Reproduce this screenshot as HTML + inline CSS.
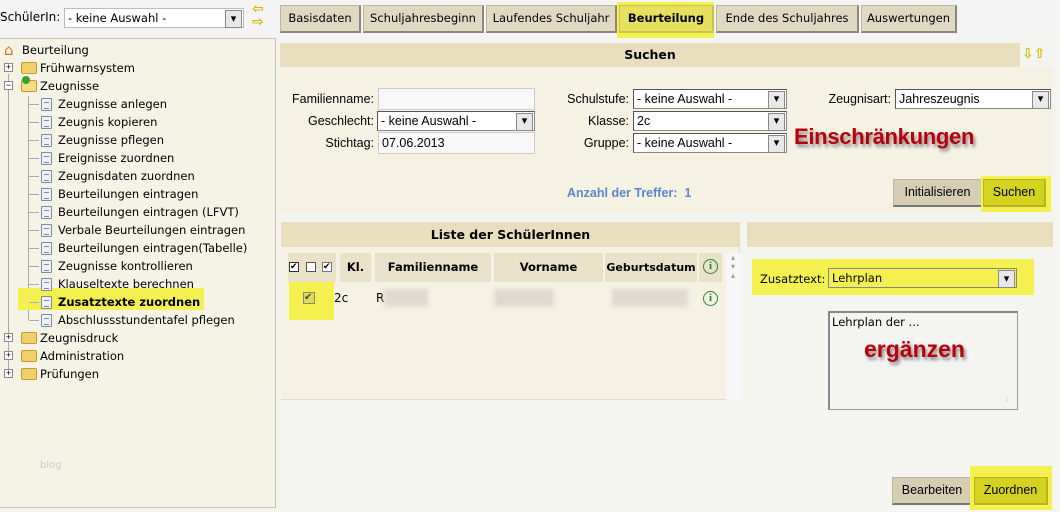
<!DOCTYPE html>
<html><head><meta charset="utf-8"><style>
*{margin:0;padding:0;box-sizing:border-box}
body{width:1060px;height:512px;position:relative;background:#f4f4f0;font-family:"DejaVu Sans",sans-serif;font-size:11px;color:#000;overflow:hidden}
.a{position:absolute;white-space:nowrap}
.tab{position:absolute;top:5px;height:28px;background:#e0d9c2;border:1px solid #bdb59c;border-bottom:2px solid #8d877a;border-right:2px solid #8d877a;font-size:11.5px;line-height:25px;text-align:center}
.hdr{position:absolute;background:#e9dfbf;font-weight:bold;font-size:12.5px;text-align:center}
.sel{position:absolute;height:20px;background:#fff;border:1px solid #888;border-top-color:#555;border-left-color:#555;font-family:"Liberation Sans",sans-serif;font-size:12.5px;line-height:18px;padding-left:3px}
.sel:after{content:"▾";position:absolute;right:1px;top:1px;width:15px;height:16px;background:#e8e8e8;border:1px solid #888;font-size:11px;line-height:15px;text-align:center}
.lbl{position:absolute;font-family:"Liberation Sans",sans-serif;font-size:12.5px;text-align:right;white-space:nowrap}
.btn{position:absolute;height:28px;background:#d6cdb2;border:1px solid #bdb59c;border-bottom:2px solid #777;border-right:2px solid #777;font-family:"Liberation Sans",sans-serif;font-size:12.5px;line-height:25px;text-align:center}
.doc{position:absolute;width:11px;height:13px;border:1px solid #7d8aa3;background:#eef2f8;border-radius:1px}
.doc:before{content:"";position:absolute;left:2px;top:3px;width:5px;height:5px;border-top:1px solid #7d8aa3;border-bottom:1px solid #7d8aa3}
.fold{position:absolute;width:16px;height:12px;background:#f1cf6a;border:1px solid #c49a2c;border-radius:2px}
.pm{position:absolute;width:9px;height:9px;border:1px solid #888;background:#fff;font-size:9px;line-height:7px;text-align:center;font-family:"Liberation Sans",sans-serif}
.ti{position:absolute;font-size:11.5px;white-space:nowrap}
.red{position:absolute;color:#b8000c;font-weight:bold;font-family:"Liberation Sans",sans-serif;text-shadow:2px 3px 3px #888}
.blur{position:absolute;height:18px;background:#dedad0;filter:blur(2px)}
.ic{position:absolute;width:15px;height:15px;border:1.5px solid #2a8a2a;border-radius:50%;color:#2a8a2a;font-weight:bold;font-size:11px;line-height:12px;text-align:center;font-family:"Liberation Serif",serif}
.th{position:absolute;top:253px;height:29px;background:#e9e2c8;font-weight:bold;font-size:11.5px;text-align:center;line-height:29px}
</style></head><body>
<div class="a" style="left:0;top:0;width:1060px;height:38px;background:#f4f4f4"></div>
<div class="a" style="left:0;top:10px;font-size:12px">SchülerIn:</div>
<div class="sel" style="left:64px;top:8px;width:180px;background:#fff;font-family:'DejaVu Sans';font-size:11.5px;border-color:#bbb">- keine Auswahl -</div>
<div class="a" style="left:252px;top:3px;color:#d8b800;font-size:14px;line-height:13px;font-weight:bold">⇦<br>⇨</div>
<div class="tab" style="left:280px;width:81px">Basisdaten</div>
<div class="tab" style="left:363px;width:121px">Schuljahresbeginn</div>
<div class="tab" style="left:486px;width:131px">Laufendes Schuljahr</div>
<div class="a" style="left:617px;top:2px;width:97px;height:36px;background:#f4f050"></div>
<div class="tab" style="left:619px;width:95px;background:#e6e060;font-weight:bold;border-color:#c9c34a">Beurteilung</div>
<div class="tab" style="left:716px;width:143px">Ende des Schuljahres</div>
<div class="tab" style="left:861px;width:96px">Auswertungen</div>
<div class="a" style="left:0;top:38px;width:276px;height:470px;background:#f5f3e6;border:1px solid #c8c4b4;border-left:none"></div>
<div class="a" style="left:8px;top:74px;width:1px;height:300px;border-left:1px solid #aaa"></div>
<div class="a" style="left:28px;top:96px;width:1px;height:224px;border-left:1px solid #aaa"></div>
<div class="a" style="left:4px;top:41px;color:#e07020;font-size:15px">⌂</div>
<div class="ti" style="left:22px;top:43px">Beurteilung</div>
<div class="pm" style="left:4px;top:63px">+</div><div class="fold" style="left:21px;top:62px"></div><div class="ti" style="left:40px;top:61px">Frühwarnsystem</div>
<div class="pm" style="left:4px;top:81px">−</div><div class="fold" style="left:21px;top:80px;background:#f5dd88"></div><div class="a" style="left:22px;top:76px;width:8px;height:8px;border-radius:50%;background:#3aa030"></div><div class="ti" style="left:40px;top:79px">Zeugnisse</div>
<div class="a" style="left:18px;top:288px;width:186px;height:22px;background:#f4f050"></div>
<div id="items"></div>
<div class="pm" style="left:4px;top:333px">+</div><div class="fold" style="left:21px;top:332px"></div><div class="ti" style="left:40px;top:331px">Zeugnisdruck</div>
<div class="pm" style="left:4px;top:351px">+</div><div class="fold" style="left:21px;top:350px"></div><div class="ti" style="left:40px;top:349px">Administration</div>
<div class="pm" style="left:4px;top:369px">+</div><div class="fold" style="left:21px;top:368px"></div><div class="ti" style="left:40px;top:367px">Prüfungen</div>
<div class="a" style="left:40px;top:460px;color:#ccc;font-size:10px">blog</div>
<div class="hdr" style="left:280px;top:43px;width:740px;height:24px;line-height:24px">Suchen</div>
<div class="a" style="left:1022px;top:46px;color:#d8b800;font-size:14px;font-weight:bold">⇩⇧</div>
<div class="a" style="left:280px;top:67px;width:772px;height:145px;background:#f5f2e4"></div>
<div class="lbl" style="left:280px;width:94px;top:92px">Familienname:</div>
<div class="a" style="left:378px;top:88px;width:157px;height:22px;background:#f8f8f8;border:1px solid #ccc"></div>
<div class="lbl" style="left:280px;width:94px;top:114px">Geschlecht:</div>
<div class="sel" style="left:377px;top:111px;width:158px">- keine Auswahl -</div>
<div class="lbl" style="left:280px;width:94px;top:136px">Stichtag:</div>
<div class="a" style="left:378px;top:132px;width:157px;height:22px;background:#f8f8f8;border:1px solid #ccc;font-family:'Liberation Sans';font-size:12.5px;line-height:20px;padding-left:3px">07.06.2013</div>
<div class="lbl" style="left:540px;width:89px;top:92px">Schulstufe:</div>
<div class="sel" style="left:633px;top:89px;width:154px">- keine Auswahl -</div>
<div class="lbl" style="left:540px;width:89px;top:114px">Klasse:</div>
<div class="sel" style="left:633px;top:111px;width:154px">2c</div>
<div class="lbl" style="left:540px;width:89px;top:136px">Gruppe:</div>
<div class="sel" style="left:633px;top:133px;width:154px">- keine Auswahl -</div>
<div class="lbl" style="left:800px;width:91px;top:92px">Zeugnisart:</div>
<div class="sel" style="left:895px;top:89px;width:156px">Jahreszeugnis</div>
<div class="red" style="left:794px;top:124px;font-size:22px;letter-spacing:-0.3px">Einschränkungen</div>
<div class="a" style="left:567px;top:186px;color:#5c86c8;font-weight:bold;font-family:'Liberation Sans';font-size:12.5px">Anzahl der Treffer:&nbsp; 1</div>
<div class="btn" style="left:893px;top:179px;width:90px">Initialisieren</div>
<div class="a" style="left:981px;top:176px;width:70px;height:36px;background:#f4f050"></div>
<div class="btn" style="left:983px;top:179px;width:63px;background:#d6d220;border-color:#b8b420">Suchen</div>
<div class="hdr" style="left:281px;top:222px;width:459px;height:25px;line-height:25px">Liste der SchülerInnen</div>
<div class="a" style="left:281px;top:247px;width:459px;height:153px;background:#f5f2e4;border-right:1px solid #ddd;border-bottom:1px solid #ddd"></div>
<div class="th" style="left:288px;width:48px"></div>
<div class="th" style="left:340px;width:31px">Kl.</div>
<div class="th" style="left:375px;width:116px">Familienname</div>
<div class="th" style="left:494px;width:109px">Vorname</div>
<div class="th" style="left:605px;width:92px;font-size:11px">Geburtsdatum</div>
<div class="th" style="left:699px;width:23px"></div>
<div class="a" style="left:289px;top:262px;width:10px;height:10px;border:1px solid #333;background:#fff;font-size:9px;line-height:8px">✔</div>
<div class="a" style="left:306px;top:262px;width:10px;height:10px;border:1px solid #555;background:#fff"></div>
<div class="a" style="left:322px;top:262px;width:10px;height:10px;border:1px solid #777;background:#fff;font-size:9px;line-height:8px">✔</div>
<div class="ic" style="left:703px;top:259px">i</div>
<div class="a" style="left:289px;top:282px;width:45px;height:38px;background:#f4f050"></div>
<div class="a" style="left:303px;top:292px;width:12px;height:12px;border:1px solid #888;background:#e0dc50;font-size:10px;line-height:10px;color:#444">✔</div>
<div class="a" style="left:334px;top:291px;font-size:12px">2c</div>
<div class="a" style="left:376px;top:291px;font-size:12px">R</div>
<div class="blur" style="left:384px;top:289px;width:44px"></div>
<div class="blur" style="left:494px;top:289px;width:60px"></div>
<div class="blur" style="left:612px;top:289px;width:76px"></div>
<div class="ic" style="left:703px;top:291px">i</div>
<div class="a" style="left:726px;top:253px;width:14px;height:147px;background:#f7f7f7;color:#999;font-size:8px;text-align:center">▴<br>▾<br>▴</div>
<div class="hdr" style="left:747px;top:222px;width:306px;height:25px"></div>
<div class="a" style="left:752px;top:259px;width:282px;height:36px;background:#f4f050"></div>
<div class="lbl" style="left:760px;top:272px;font-family:'DejaVu Sans';font-size:11.5px">Zusatztext:</div>
<div class="sel" style="left:828px;top:268px;width:189px;background:#f4f050;border-color:#888;font-family:'DejaVu Sans';font-size:11.5px">Lehrplan</div>
<div class="a" style="left:828px;top:311px;width:190px;height:99px;border:1px solid #999;border-top:2px solid #888;border-left:2px solid #888;background:#f4f4f2;font-size:11.5px;padding:2px">Lehrplan der ...</div>
<div class="red" style="left:864px;top:336px;font-size:23px">ergänzen</div>
<div class="a" style="left:1004px;top:396px;color:#aaa;font-size:8px">⁘</div>
<div class="btn" style="left:892px;top:477px;width:81px">Bearbeiten</div>
<div class="a" style="left:970px;top:466px;width:82px;height:44px;background:#f4f050"></div>
<div class="btn" style="left:974px;top:477px;width:74px;background:#d6d220;border-color:#b8b420">Zuordnen</div>
<script>
var t=["Zeugnisse anlegen","Zeugnis kopieren","Zeugnisse pflegen","Ereignisse zuordnen","Zeugnisdaten zuordnen","Beurteilungen eintragen","Beurteilungen eintragen (LFVT)","Verbale Beurteilungen eintragen","Beurteilungen eintragen(Tabelle)","Zeugnisse kontrollieren","Klauseltexte berechnen","Zusatztexte zuordnen","Abschlussstundentafel pflegen"],h="";
t.forEach(function(s,i){var y=97+i*18;h+='<div class="a" style="left:29px;top:'+(y+7)+'px;width:10px;border-top:1px solid #aaa"></div><div class="doc" style="left:41px;top:'+(y+1)+'px"></div><div class="ti" style="left:58px;top:'+y+'px;'+(i==11?'font-weight:bold':'')+'">'+s+'</div>'});
document.getElementById("items").outerHTML=h;
</script>
</body></html>
